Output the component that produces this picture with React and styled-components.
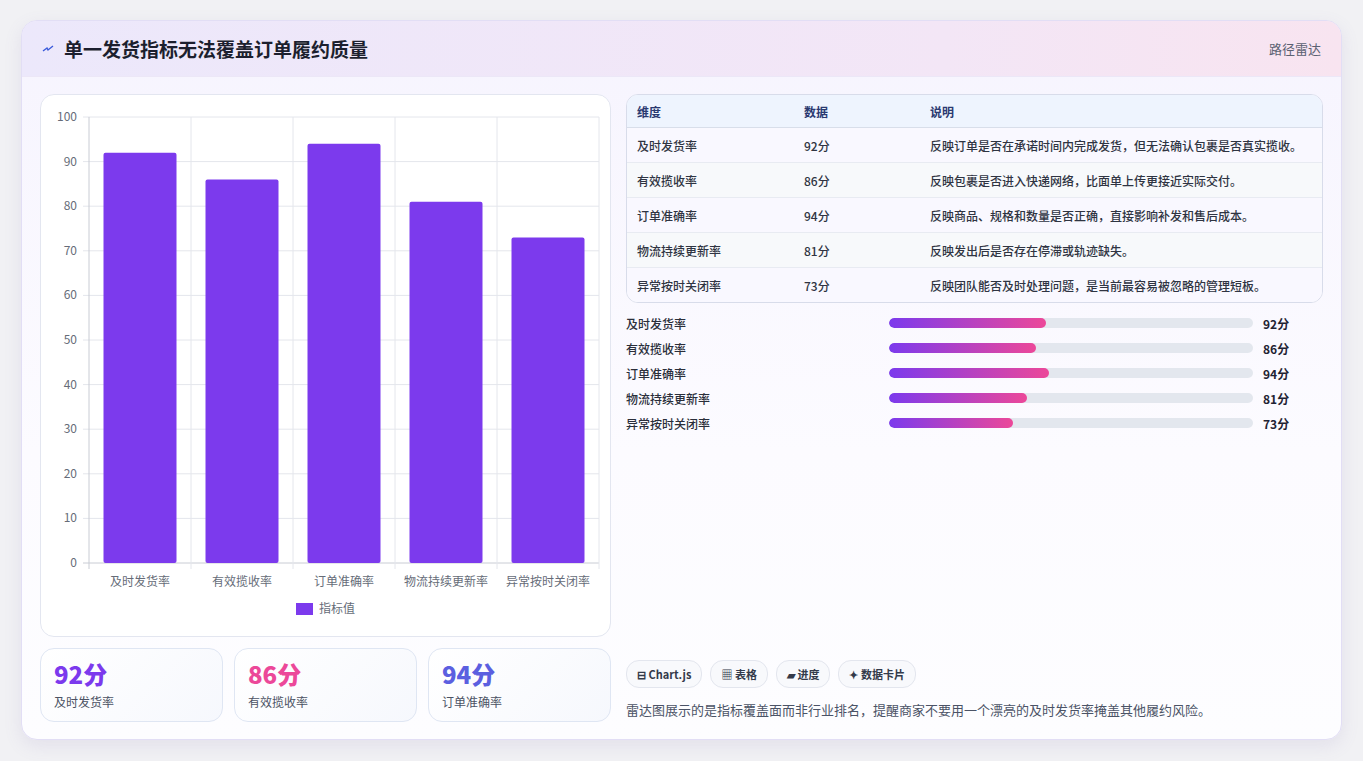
import React from "react";
import styled, { createGlobalStyle } from "styled-components";

const G = createGlobalStyle`
  html,body{margin:0;background:#f1f1f4;}
  body{font-family:"Noto Sans CJK SC","Noto Sans",sans-serif;color:#1f2333;}
`;
const Page = styled.div`padding:20px 21px 21px 21px;`;
const Card = styled.div`
  height:720px;box-sizing:border-box;background:linear-gradient(180deg,#f6f4fe 0%,#fcfbff 60%,#fdfdff 100%);
  border:1px solid #e2def5;border-radius:16px;overflow:hidden;display:flex;flex-direction:column;
  box-shadow:0 6px 18px rgba(120,110,170,0.12);
`;
const Header = styled.div`
  height:55px;flex:none;display:flex;align-items:center;justify-content:space-between;padding:0 20px 0 20px;
  background:linear-gradient(90deg,#ece8fb 0%,#f3e6f6 70%,#f8e4f0 100%);border-bottom:1px solid #ece7f7;
`;
const Title = styled.h1`margin:0;font-size:19px;font-weight:700;display:flex;align-items:center;gap:10px;color:#1c1f2e;`;
const Tag = styled.span`font-size:13px;color:#5b6172;`;
const Body = styled.div`flex:1;display:grid;grid-template-columns:571px 1fr;gap:15px;padding:17px 18px 18px 18px;`;
const Left = styled.div`display:flex;flex-direction:column;gap:11px;`;
const ChartCard = styled.div`height:543px;box-sizing:border-box;background:#fff;border:1px solid #e3e6f0;border-radius:14px;`;
const Stats = styled.div`display:grid;grid-template-columns:repeat(3,1fr);gap:11px;`;
const Stat = styled.div`height:74px;box-sizing:border-box;border:1px solid #dfe6f3;border-radius:14px;background:linear-gradient(135deg,#fff,#f6f8fd);padding:11px 13px;`;
const StatNum = styled.div`font-size:24px;font-weight:800;color:${p=>p.c};line-height:1.2;`;
const StatLbl = styled.div`font-size:12px;color:#4b5263;margin-top:4px;`;
const Right = styled.div`display:flex;flex-direction:column;justify-content:space-between;`;
const TableBox = styled.div`border:1px solid #d8dcea;border-radius:12px;overflow:hidden;background:#fff;`;
const Table = styled.table`width:100%;border-collapse:collapse;font-size:12px;`;
const Th = styled.th`text-align:left;font-weight:600;color:#2a3970;height:32px;padding:0 10px;background:#eef4fe;border-bottom:1px solid #d8deea;width:${p=>p.w||"auto"};`;
const Td = styled.td`height:34px;padding:0 10px;color:#2f3442;font-weight:500;border-top:1px solid #e8ebf2;background:${p=>p.odd?"#f9f8ff":"#f7f9fb"};`;
const Bars = styled.div`margin-top:11px;display:flex;flex-direction:column;gap:7px;`;
const BarRow = styled.div`display:grid;grid-template-columns:263px 364px 1fr;align-items:center;height:18px;font-size:12px;`;
const BarLbl = styled.span`color:#2a2e3a;font-weight:500;`;
const Track = styled.div`height:10px;border-radius:5px;background:#e3e7ee;overflow:hidden;`;
const Fill = styled.div`height:100%;border-radius:5px;background:linear-gradient(90deg,#7c3aed,#ec4899);`;
const BarVal = styled.span`padding-left:10px;font-weight:700;color:#1f2333;`;
const Chips = styled.div`display:flex;gap:8px;margin-bottom:12px;`;
const Chip = styled.span`height:26px;padding:0 10px;display:flex;align-items:center;gap:4px;border:1px solid #e3e6ee;border-radius:13px;background:#f8f9fc;font-size:11px;font-weight:600;color:#333a4a;`;
const Note = styled.p`margin:0 0 3px;font-size:13px;color:#4b5366;`;

const data=[["及时发货率",92,"反映订单是否在承诺时间内完成发货，但无法确认包裹是否真实揽收。"],["有效揽收率",86,"反映包裹是否进入快递网络，比面单上传更接近实际交付。"],["订单准确率",94,"反映商品、规格和数量是否正确，直接影响补发和售后成本。"],["物流持续更新率",81,"反映发出后是否存在停滞或轨迹缺失。"],["异常按时关闭率",73,"反映团队能否及时处理问题，是当前最容易被忽略的管理短板。"]];

function Chart(){
  const L=48,R=558,T=22,B=468,cw=(R-L)/5;
  const y=v=>B-(v/100)*(B-T);
  return <svg width="570" height="541" style={{display:"block"}} fontFamily='"Noto Sans CJK SC",sans-serif'>
    {[0,10,20,30,40,50,60,70,80,90,100].map(v=><g key={v}>
      <line x1={L-6} x2={R} y1={y(v)} y2={y(v)} stroke={v===0?"#c9ccd4":"#e4e6ec"}/>
      <text x={L-12} y={y(v)+4} textAnchor="end" fontSize="12" fill="#666c78">{v}</text></g>)}
    {[0,1,2,3,4,5].map(i=><line key={i} x1={L+i*cw} x2={L+i*cw} y1={T} y2={B+6} stroke={i===0?"#c9ccd4":"#e4e6ec"}/>)}
    {data.map((d,i)=><g key={i}>
      <rect x={L+i*cw+14.5} y={y(d[1])} width={73} height={B-y(d[1])} rx="2" fill="#7c3aed"/>
      <text x={L+i*cw+cw/2} y={B+23} textAnchor="middle" fontSize="12" fill="#666c78">{d[0]}</text></g>)}
    <rect x="255" y="508" width="17" height="12" fill="#7c3aed"/>
    <text x="278" y="518" fontSize="12" fill="#666c78">指标值</text>
  </svg>;
}

export default function App(){
  return <Page><G/><Card>
    <Header><Title><svg width="12" height="8" viewBox="0 0 12 8"><path d="M1 6 L5 3 L6 5 L11 1" stroke="#3b5bdb" strokeWidth="1.4" fill="none"/></svg>单一发货指标无法覆盖订单履约质量</Title><Tag>路径雷达</Tag></Header>
    <Body>
      <Left>
        <ChartCard><Chart/></ChartCard>
        <Stats>
          <Stat><StatNum c="#7c3aed">92分</StatNum><StatLbl>及时发货率</StatLbl></Stat>
          <Stat><StatNum c="#ec4899">86分</StatNum><StatLbl>有效揽收率</StatLbl></Stat>
          <Stat><StatNum c="#5b5fe0">94分</StatNum><StatLbl>订单准确率</StatLbl></Stat>
        </Stats>
      </Left>
      <Right>
        <div>
          <TableBox><Table><thead><tr><Th w="147px">维度</Th><Th w="106px">数据</Th><Th>说明</Th></tr></thead>
            <tbody>{data.map((d,i)=><tr key={i}><Td odd={i%2===0}>{d[0]}</Td><Td odd={i%2===0}>{d[1]}分</Td><Td odd={i%2===0}>{d[2]}</Td></tr>)}</tbody></Table></TableBox>
          <Bars>{data.map((d,i)=><BarRow key={i}><BarLbl>{d[0]}</BarLbl><Track><Fill style={{width:`${d[1]*0.468}%`}}/></Track><BarVal>{d[1]}分</BarVal></BarRow>)}</Bars>
        </div>
        <div>
          <Chips><Chip>⊟ Chart.js</Chip><Chip>▦ 表格</Chip><Chip>▰ 进度</Chip><Chip>✦ 数据卡片</Chip></Chips>
          <Note>雷达图展示的是指标覆盖面而非行业排名，提醒商家不要用一个漂亮的及时发货率掩盖其他履约风险。</Note>
        </div>
      </Right>
    </Body>
  </Card></Page>;
}
